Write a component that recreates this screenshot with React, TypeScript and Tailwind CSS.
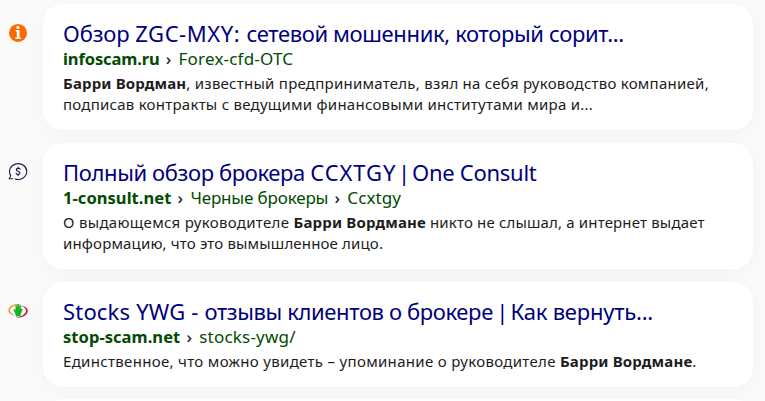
import type { ReactNode } from 'react';

function InfoIcon() {
  return (
    <svg viewBox="0 0 20 20" className="size-5">
      <circle cx="10" cy="9.9" r="9" fill="#ff6a00" />
      <circle cx="10" cy="4.4" r="1.6" fill="#fff" />
      <path d="M7.6 7.1h4v7.5h1.1v1.5H7.4v-1.5h1.4V8.6H7.6z" fill="#fff" />
    </svg>
  );
}

function ChatIcon() {
  return (
    <svg viewBox="0 0 20 20" className="size-5" fill="none" stroke="#1d1d45" strokeLinecap="round" strokeLinejoin="round">
      <path d="M2.6 13.4A8.6 7.9 0 1 1 7.2 17" strokeWidth="1.1" />
      <path d="M2.6 13.4C2.7 15 2 15.9 1 16.8H4.8" strokeWidth="1.1" />
      <path d="M12 7.1C11.5 6 8.3 6 8.3 7.8C8.3 9.6 12 8.9 12 10.9C12 12.7 8.7 12.6 8.2 11.4M10.1 5V6.2M10.1 12.5V13.6" strokeWidth="1.2" />
    </svg>
  );
}

function HandIcon() {
  return (
    <svg viewBox="0 0 20 20" className="size-5" fill="none">
      <path d="M12.5 3.2C6 1.8 .4 5.4 .4 9.4C.4 12 3.5 14.2 7 14.6C4 13.2 2 11.2 2 9.2C2.2 6.4 6.8 4 12.5 3.2z" fill="#e3982c" />
      <path d="M7.5 16.6C14 17.4 19.8 13.8 19.8 10C19.8 7.4 17.2 5.2 13.6 4.7C16.6 6.2 18.2 8 18 10.2C17.6 13.2 13 15.6 7.5 16.6z" fill="#c91f2b" />
      <path d="M7.3 12.2L5.7 8.8L6.8 8.3L7.9 9.7L7.6 4.8L8.7 4.6L9.3 7.6L9.5 3.2H10.7L11 7.6L11.9 4.2L13 4.6L12.6 8.8L13.7 7.7L14.4 8.5L12.5 13.3L12 15.2H8.2z" fill="#14b322" stroke="#14a020" strokeWidth=".4" />
    </svg>
  );
}

function Crumb({ children }: { children: ReactNode }) {
  return (
    <>
      <span className="w-[19px] pr-px text-center font-medium text-[#222]">›</span>
      {children}
    </>
  );
}

function Result({ icon, title, path, children }: { icon: ReactNode; title: ReactNode; path: ReactNode; children: ReactNode }) {
  return (
    <article className="flex">
      <div className="w-[43px] shrink-0 pt-[19px] pl-2">{icon}</div>
      <div className="w-[710px] rounded-[20px] bg-white px-5 pt-[15px] pb-[15px] shadow-[0_4px_20px_rgba(0,0,0,0.03)]">
        <h2 className="mb-px text-[22px] leading-7 text-[#00007f]">{title}</h2>
        <div className="flex text-[17px] leading-[22px] text-[#004b00]">{path}</div>
        <p className="mt-[3px] text-[15px] leading-[21px] text-[#1c1c1c]">{children}</p>
      </div>
    </article>
  );
}

export default function App() {
  return (
    <main className="flex h-[401px] w-[765px] flex-col gap-[13px] overflow-hidden bg-[#fafafa] pt-1 font-['Noto_Sans',sans-serif] whitespace-nowrap">
      <Result
        icon={<InfoIcon />}
        title={
          <>
            <span className="tracking-[-0.1px]">Обзор </span>
            <span className="tracking-[0.55px]">ZGC-MXY: </span>
            <span className="tracking-[-0.36px]">сетевой мошенник, который сорит...</span>
          </>
        }
        path={
          <>
            <b className="text-[16.5px] tracking-[-0.12px]">infoscam.ru</b>
            <Crumb><span className="tracking-[0.2px]">Forex-cfd-OTC</span></Crumb>
          </>
        }
      >
        <b className="tracking-[0.16px]">Барри Вордман</b>
        <span className="tracking-[0.25px]">, известный предприниматель, взял на себя руководство компанией,</span>
        <br />
        <span className="tracking-[0.25px]">подписав контракты с ведущими финансовыми институтами мира и...</span>
      </Result>
      <Result
        icon={<ChatIcon />}
        title={
          <>
            <span className="tracking-[-0.37px]">Полный обзор брокера </span>
            <span className="tracking-[0.9px]">CCXTGY</span>
            <span className="tracking-[-4px]"> </span>
            <span className="tracking-[-1.9px]">| </span>
            <span className="tracking-[-0.27px]">One Consult</span>
          </>
        }
        path={
          <>
            <b className="text-[16.5px] tracking-[0.05px]">1-consult.net</b>
            <Crumb><span className="tracking-[-0.16px]">Черные брокеры</span></Crumb>
            <Crumb><span className="tracking-[0.1px]">Ccxtgy</span></Crumb>
          </>
        }
      >
        <span className="tracking-[0.32px]">О выдающемся руководителе </span>
        <b className="tracking-[0.17px]">Барри Вордмане</b>
        <span className="tracking-[0.16px]"> никто не слышал, а интернет выдает</span>
        <br />
        <span className="tracking-[0.16px]">информацию, что это вымышленное лицо.</span>
      </Result>
      <Result
        icon={<HandIcon />}
        title={
          <>
            <span className="tracking-[0.18px]">Stocks YWG - </span>
            <span className="tracking-[-0.37px]">отзывы клиентов о брокере</span>
            <span className="tracking-[-2.5px]"> </span>
            <span className="tracking-[-1.8px]">| </span>
            <span className="tracking-[-0.22px]">Как вернуть...</span>
          </>
        }
        path={
          <>
            <b className="text-[16.5px] tracking-[0.05px]">stop-scam.net</b>
            <Crumb><span className="tracking-[0.2px]">stocks-ywg/</span></Crumb>
          </>
        }
      >
        <span className="tracking-[0.32px]">Единственное, что можно увидеть – упоминание о руководителе </span>
        <b className="tracking-[0.17px]">Барри Вордмане</b>.
      </Result>
      <div className="-mt-[1px] ml-[43px] h-10 w-[710px] shrink-0 rounded-[20px] bg-white" />
    </main>
  );
}
